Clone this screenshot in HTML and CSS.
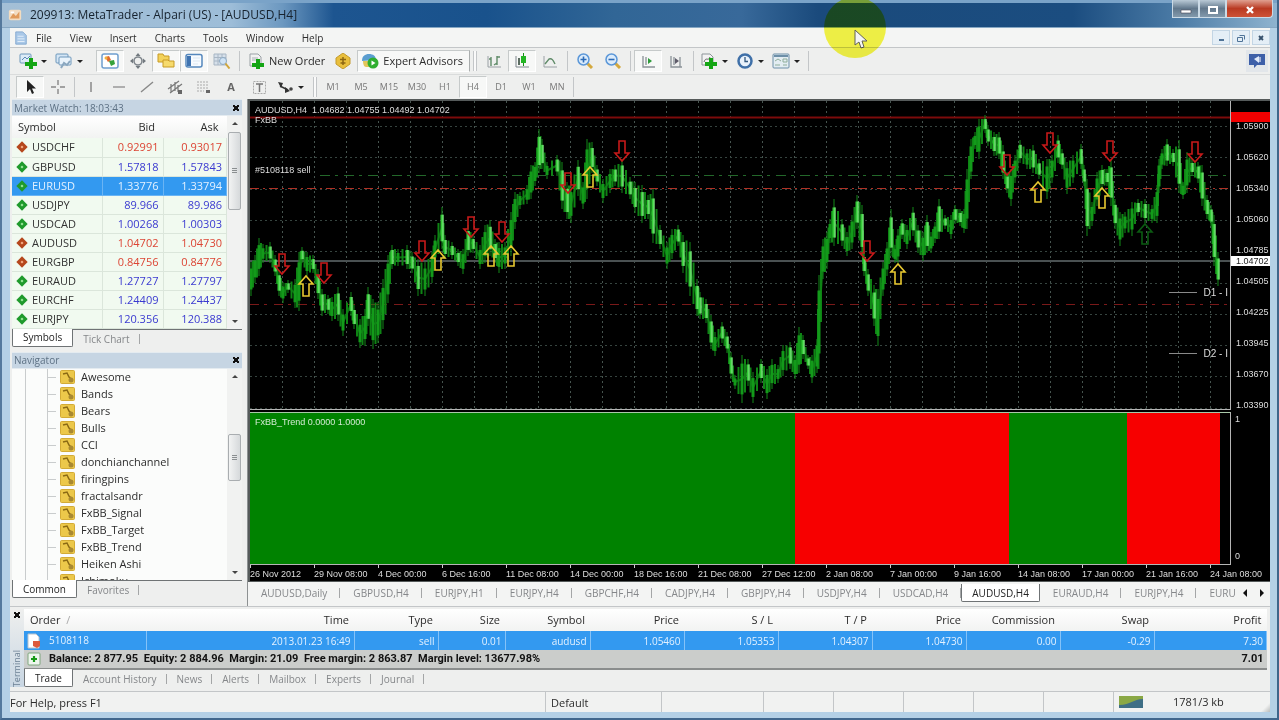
FILE: index.html
```html
<!DOCTYPE html>
<html lang="en">

<head>
  <meta charset="utf-8" />
  <meta name="viewport" content="width=device-width, initial-scale=1" />
  <title>209913: MetaTrader - Alpari (US) - [AUDUSD,H4]</title>
  <link rel="stylesheet" href="styles.css">
</head>

<body>
  <div class="window">
    <header class="titlebar">
      <svg class="app-icon" viewBox="0 0 16 16"><rect x="1" y="2" width="14" height="12" rx="2" fill="#f3dcc0" /><path d="M2 12l4-6 3 3 4-5v8z" fill="#e09a5a" /><path d="M3 4h4v2H3z" fill="#fff" /></svg>
      <h1>209913: MetaTrader - Alpari (US) - [AUDUSD,H4]</h1>
      <div class="caption-buttons">
        <button class="caption-btn" aria-label="Minimize"><svg viewBox="0 0 12 10"><path d="M1 5h10v3H1z" fill="#fff" stroke="#445" stroke-width=".6" /></svg></button>
        <button class="caption-btn" aria-label="Maximize"><svg viewBox="0 0 12 10"><path d="M2 2h8v6H2z" fill="none" stroke="#fff" stroke-width="2" /></svg></button>
        <button class="caption-btn close" aria-label="Close"><svg viewBox="0 0 12 10"><path d="M3 2l6 6M9 2L3 8" stroke="#fff" stroke-width="2.4" /></svg></button>
      </div>
    </header>

    <nav class="menubar">
      <svg class="doc-icon" viewBox="0 0 16 16"><path d="M2 1h8l4 4v10H2z" fill="#a9c8e8" stroke="#7fa6cf" /><path d="M4 6h7M4 9h8M4 12h8" stroke="#e8f2fb" /></svg>
      <a href="#">File</a>
      <a href="#">View</a>
      <a href="#">Insert</a>
      <a href="#">Charts</a>
      <a href="#">Tools</a>
      <a href="#">Window</a>
      <a href="#">Help</a>
      <div class="mdi-buttons">
        <button aria-label="Minimize chart"><svg viewBox="0 0 10 10"><path d="M3 7h5" stroke="#4f7397" stroke-width="2" /></svg></button>
        <button aria-label="Restore chart"><svg viewBox="0 0 10 10"><path d="M3.500 2.500h5v4M1.500 4.500h5v4h-5z" fill="none" stroke="#4f7397" /></svg></button>
        <button aria-label="Close chart"><svg viewBox="0 0 10 10"><path d="M3 3l4 4M7 3L3 7" stroke="#35506c" stroke-width="1.800" /></svg></button>
      </div>
    </nav>

    <div class="toolbar">
      <button class="tool drop" aria-label="New chart"><svg viewBox="0 0 18 16"><rect x="1" y="1" width="11" height="9" rx="1" fill="#dcebf7" stroke="#6d97bb" /><path d="M3 7l3-3 2 2 3-3" fill="none" stroke="#5b8cb6" /><path d="M10 5h4v4h4v4h-4v3h-4v-3H6V9h4z" fill="#14a514" /></svg></button>
      <button class="tool drop" aria-label="Profiles"><svg viewBox="0 0 18 16"><rect x="1" y="1" width="12" height="9" rx="1" fill="#d5e6f5" stroke="#6d97bb" /><rect x="4" y="4" width="12" height="8" rx="1" fill="#e9f3fb" stroke="#6d97bb" /><path d="M6 15l3-5 3 2 3-4" fill="none" stroke="#8aa7bf" stroke-width="2" /></svg></button>
      <span class="gap"></span>
      <button class="tool pressed" aria-label="Market Watch"><svg viewBox="0 0 18 16"><rect x="1" y="1" width="16" height="14" rx="2" fill="#fff" stroke="#6f9fcf" stroke-width="1.500" /><path d="M4 4l4-1 2 4-3 2z" fill="#e0692e" /><path d="M8 8l5-1 1 4-4 2z" fill="#35a23a" /><circle cx="5" cy="5" r="1.500" fill="#f0b33a" /></svg></button>
      <button class="tool" aria-label="Data Window"><svg viewBox="0 0 18 16"><circle cx="9" cy="8" r="4" fill="none" stroke="#7f868c" stroke-width="1.600" /><path d="M9 0l2.500 3h-5zM9 16l-2.500-3h5zM1 8l3-2.500v5zM17 8l-3-2.500v5z" fill="#72797f" /></svg></button>
      <button class="tool pressed" aria-label="Navigator"><svg viewBox="0 0 18 16"><path d="M1 1h5l1 2h5v6H1z" fill="#f3d25a" stroke="#c79a25" /><path d="M6 7h5l1 1h5v6H6z" fill="#f6da6c" stroke="#c79a25" /></svg></button>
      <button class="tool pressed" aria-label="Terminal"><svg viewBox="0 0 18 16"><rect x="1" y="1.500" width="16" height="12.500" rx="2" fill="#f7fbff" stroke="#5588bd" stroke-width="1.500" /><rect x="2" y="3" width="4" height="10" fill="#3f73b0" /><path d="M8 5h7M8 8h7M8 11h5" stroke="#dbe7f1" /></svg></button>
      <button class="tool" aria-label="Strategy Tester"><svg viewBox="0 0 18 16"><path d="M1 1h12v11H1z" fill="#d6e0ea" stroke="#a8b6c4" /><path d="M1 4.500h12M1 8h12M5 1v11M9 1v11" stroke="#a8b6c4" /><circle cx="10" cy="8" r="3.500" fill="#cfe3f5" stroke="#8da9c2" /><path d="M12.500 10.500l4 5" stroke="#d1a63a" stroke-width="2" /></svg></button>
      <span class="separator"></span>
      <button class="tool wide new-order"><svg viewBox="0 0 18 16"><path d="M3 1h8l3 3v9H3z" fill="#f2f2f2" stroke="#9aa0a5" /><path d="M5 5h6M5 7h5" stroke="#a9afb4" /><path d="M9 6h4v4h4v4h-4v2H9v-2H5v-4h4z" fill="#14a514" /></svg>New Order</button>
      <button class="tool" aria-label="MetaEditor"><svg viewBox="0 0 18 16"><path d="M9 0l7 5v6l-7 5-7-5V5z" fill="#e9bf3c" stroke="#c39a2c" /><path d="M9 4v8M6 6.500h6M6.500 10h5" stroke="#8d6712" stroke-width="1.500" /></svg></button>
      <button class="tool wide pressed experts"><svg viewBox="0 0 18 16"><path d="M1 8C1 3 4 1 8 1s7 2 7 6z" fill="#5b9ed0" /><path d="M2 8h9v6H5c-2 0-3-3-3-6z" fill="#e2c65a" /><circle cx="12" cy="10" r="5.500" fill="#2fae2f" /><path d="M10.500 7.500l4 2.500-4 2.500z" fill="#fff" /></svg>Expert Advisors</button>
      <span class="separator handle"></span>
      <button class="tool" aria-label="Bar chart"><svg viewBox="0 0 18 16"><path d="M3 3v11h13" fill="none" stroke="#9aa0a5" /><path d="M6 4v9M9 12l3-2M12 3v9M12 4h3M4 6h2" stroke="#5f8b68" stroke-width="1.400" /></svg></button>
      <button class="tool pressed" aria-label="Candlesticks"><svg viewBox="0 0 18 16"><path d="M3 3v11h13" fill="none" stroke="#7e868c" /><path d="M6 5v7" stroke="#5c6d62" stroke-width="2" /><path d="M10.500 0v13" stroke="#158f15" /><path d="M8 3h5v7H8z" fill="#23b523" /></svg></button>
      <button class="tool" aria-label="Line chart"><svg viewBox="0 0 18 16"><path d="M3 3v11h13" fill="none" stroke="#9aa0a5" /><path d="M4 11l4-5c3-1 4 1 6 5" fill="none" stroke="#5f8b68" stroke-width="1.400" /></svg></button>
      <span class="separator"></span>
      <button class="tool" aria-label="Zoom in"><svg viewBox="0 0 18 16"><path d="M11 10l5 5" stroke="#d4a93e" stroke-width="3" /><circle cx="7.500" cy="6.500" r="5.500" fill="#dcecfb" stroke="#5b97d8" stroke-width="1.500" /><path d="M4.500 6.500h6M7.500 3.500v6" stroke="#2c6cb8" stroke-width="1.600" /></svg></button>
      <button class="tool" aria-label="Zoom out"><svg viewBox="0 0 18 16"><path d="M11 10l5 5" stroke="#d4a93e" stroke-width="3" /><circle cx="7.500" cy="6.500" r="5.500" fill="#dcecfb" stroke="#5b97d8" stroke-width="1.500" /><path d="M4.500 6.500h6" stroke="#2c6cb8" stroke-width="1.600" /></svg></button>
      <span class="separator"></span>
      <button class="tool pressed" aria-label="Auto scroll"><svg viewBox="0 0 18 16"><path d="M4 3v11h12M7 4v8" fill="none" stroke="#8b9298" stroke-width="1.300" /><path d="M9 5l4 3-4 3z" fill="#2c9a38" /></svg></button>
      <button class="tool" aria-label="Chart shift"><svg viewBox="0 0 18 16"><path d="M4 3v11h11M7 4v8M13 4v10" fill="none" stroke="#8b9298" stroke-width="1.300" /><path d="M8 5l4 3-4 3z" fill="#5d5a68" /></svg></button>
      <span class="separator"></span>
      <button class="tool drop" aria-label="Indicators"><svg viewBox="0 0 18 16"><path d="M2 1h8l3 3v8H2z" fill="#f2f2f2" stroke="#8d9499" /><path d="M4 9c2-6 4 0 6-5" fill="none" stroke="#666" /><path d="M9 5h4v4h4v4h-4v3H9v-3H5V9h4z" fill="#14a514" /></svg></button>
      <button class="tool drop" aria-label="Periodicity"><svg viewBox="0 0 18 16"><circle cx="9" cy="8" r="6.500" fill="#e9f2fb" stroke="#3f70a8" stroke-width="2.500" /><path d="M9 4v4.500h3" fill="none" stroke="#33587f" stroke-width="1.300" /></svg></button>
      <button class="tool drop" aria-label="Templates"><svg viewBox="0 0 18 16"><rect x="1" y="1" width="16" height="14" rx="1" fill="#e3edf2" stroke="#6d8fa8" /><path d="M2 3h14" stroke="#6d8fa8" stroke-width="2" /><path d="M3 8l3-2 3 2M3 12h5M11 6h4v3h-4zM11 12h4" fill="none" stroke="#8fae9b" /></svg></button>
      <span class="separator"></span>
      <button class="tool chat" aria-label="Community chat"><svg viewBox="0 0 18 16"><path d="M1 1h16v11h-8l-3 3v-3H1z" fill="#3d5fa8" /><path d="M6 6l5-3v7z" fill="#dfe9fa" /><path d="M12 4v5" stroke="#fff" /></svg></button>
    </div>

    <div class="toolbar lines">
      <button class="tool pressed" aria-label="Cursor"><svg viewBox="0 0 18 16"><path d="M6 1v12l3-3 2 5 2-1-2-4.500h4z" fill="#222" /></svg></button>
      <button class="tool" aria-label="Crosshair"><svg viewBox="0 0 18 16"><path d="M9 1v5M9 10v5M2 8h5M11 8h5" stroke="#888" stroke-width="1.400" /></svg></button>
      <span class="separator"></span>
      <button class="tool" aria-label="Vertical line"><svg viewBox="0 0 18 16"><path d="M9 3v10" stroke="#888" stroke-width="1.500" /></svg></button>
      <button class="tool" aria-label="Horizontal line"><svg viewBox="0 0 18 16"><path d="M3 8h12" stroke="#999" stroke-width="1.500" /></svg></button>
      <button class="tool" aria-label="Trendline"><svg viewBox="0 0 18 16"><path d="M3 13L15 3" stroke="#888" stroke-width="1.400" /></svg></button>
      <button class="tool" aria-label="Equidistant channel"><svg viewBox="0 0 18 16"><path d="M2 10L13 2M4 14L16 5M5 5v8M9 3v9M12 6v7" stroke="#777" stroke-width="1.200" /><path d="M12 11h4v4h-4z" fill="#666" /></svg></button>
      <button class="tool" aria-label="Fibonacci retracement"><svg viewBox="0 0 18 16"><path d="M3 3h11M3 6h11M3 9h11M3 12h7" stroke="#aaa" stroke-dasharray="2 1" /><path d="M12 11h4v3h-4z" fill="#666" /></svg></button>
      <button class="tool letter">A</button>
      <button class="tool" aria-label="Text label"><svg viewBox="0 0 18 16"><rect x="3.500" y="2.500" width="12" height="12" fill="none" stroke="#aaa" stroke-dasharray="2 1" /><path d="M6 5h7M9.500 5v8" stroke="#777" stroke-width="1.500" /></svg></button>
      <button class="tool drop" aria-label="Arrows"><svg viewBox="0 0 18 16"><path d="M2 3l5 1-2 5zM9 8l5 4-5 2z" fill="#333" /><path d="M4 7l8 4" stroke="#333" stroke-width="1.500" /><circle cx="15" cy="10" r="1.800" fill="#444" /></svg></button>
      <span class="separator handle"></span>
      <button class="tool period">M1</button>
      <button class="tool period">M5</button>
      <button class="tool period">M15</button>
      <button class="tool period">M30</button>
      <button class="tool period">H1</button>
      <button class="tool period pressed">H4</button>
      <button class="tool period">D1</button>
      <button class="tool period">W1</button>
      <button class="tool period">MN</button>
      <span class="separator"></span>
    </div>

    <main class="workspace">
      <aside class="sidebar">
        <section class="panel">
          <h2 class="panel-title">Market Watch: 18:03:43<button class="panel-close" aria-label="Close Market Watch"></button></h2>
          <div class="panel-body">
            <table class="quotes">
              <thead>
                <tr><th>Symbol</th><th>Bid</th><th>Ask</th></tr>
              </thead>
              <tbody>
                <tr class="down"><td>USDCHF</td><td>0.92991</td><td>0.93017</td></tr>
                <tr><td>GBPUSD</td><td>1.57818</td><td>1.57843</td></tr>
                <tr class="selected"><td>EURUSD</td><td>1.33776</td><td>1.33794</td></tr>
                <tr><td>USDJPY</td><td>89.966</td><td>89.986</td></tr>
                <tr><td>USDCAD</td><td>1.00268</td><td>1.00303</td></tr>
                <tr class="down"><td>AUDUSD</td><td>1.04702</td><td>1.04730</td></tr>
                <tr class="down"><td>EURGBP</td><td>0.84756</td><td>0.84776</td></tr>
                <tr><td>EURAUD</td><td>1.27727</td><td>1.27797</td></tr>
                <tr><td>EURCHF</td><td>1.24409</td><td>1.24437</td></tr>
                <tr><td>EURJPY</td><td>120.356</td><td>120.388</td></tr>
              </tbody>
            </table>
            <div class="scrollbar"><span class="thumb tall"></span></div>
          </div>
          <div class="tabs">
            <button class="tab active">Symbols</button>
            <button class="tab">Tick Chart</button>
          </div>
        </section>

        <section class="panel navigator">
          <h2 class="panel-title">Navigator<button class="panel-close" aria-label="Close Navigator"></button></h2>
          <div class="panel-body">
            <ul class="tree">
              <li>Awesome</li>
              <li>Bands</li>
              <li>Bears</li>
              <li>Bulls</li>
              <li>CCI</li>
              <li>donchianchannel</li>
              <li>firingpins</li>
              <li>fractalsandr</li>
              <li>FxBB_Signal</li>
              <li>FxBB_Target</li>
              <li>FxBB_Trend</li>
              <li>Heiken Ashi</li>
              <li>Ichimoku</li>
            </ul>
            <div class="scrollbar"><span class="thumb middle"></span></div>
          </div>
          <div class="tabs">
            <button class="tab active">Common</button>
            <button class="tab">Favorites</button>
          </div>
        </section>
      </aside>

      <section class="charts">
        <div class="chart">
          <div class="plot">
            <svg id="price" viewBox="250 102 980 308" preserveAspectRatio="none"></svg>
            <p class="plot-title">AUDUSD,H4&nbsp; 1.04682 1.04755 1.04492 1.04702<br>FxBB</p>
            <p class="order-label">#5108118 sell</p>
            <p class="level d1">D1 - I</p>
            <p class="level d2">D2 - I</p>
          </div>
          <div class="price-axis">
            <span class="stop"></span>
            <span>1.05900</span>
            <span>1.05620</span>
            <span>1.05340</span>
            <span>1.05060</span>
            <span>1.04785</span>
            <span>1.04505</span>
            <span>1.04225</span>
            <span>1.03945</span>
            <span>1.03670</span>
            <span>1.03390</span>
            <span class="current">1.04702</span>
          </div>
          <div class="trend">
            <span class="up long"></span>
            <span class="dn wide"></span>
            <span class="up short"></span>
            <span class="dn last"></span>
            <p>FxBB_Trend 0.0000 1.0000</p>
          </div>
          <div class="trend-axis"><span>1</span><span>0</span></div>
          <div class="time-axis">
            <span>26 Nov 2012</span>
            <span>29 Nov 08:00</span>
            <span>4 Dec 00:00</span>
            <span>6 Dec 16:00</span>
            <span>11 Dec 08:00</span>
            <span>14 Dec 00:00</span>
            <span>18 Dec 16:00</span>
            <span>21 Dec 08:00</span>
            <span>27 Dec 12:00</span>
            <span>2 Jan 08:00</span>
            <span>7 Jan 00:00</span>
            <span>9 Jan 16:00</span>
            <span>14 Jan 08:00</span>
            <span>17 Jan 00:00</span>
            <span>21 Jan 16:00</span>
            <span>24 Jan 08:00</span>
          </div>
        </div>
        <div class="tabs chart-tabs">
          <div class="tab-strip">
            <button class="tab">AUDUSD,Daily</button>
            <button class="tab">GBPUSD,H4</button>
            <button class="tab">EURJPY,H1</button>
            <button class="tab">EURJPY,H4</button>
            <button class="tab">GBPCHF,H4</button>
            <button class="tab">CADJPY,H4</button>
            <button class="tab">GBPJPY,H4</button>
            <button class="tab">USDJPY,H4</button>
            <button class="tab">USDCAD,H4</button>
            <button class="tab active">AUDUSD,H4</button>
            <button class="tab">EURAUD,H4</button>
            <button class="tab">EURJPY,H4</button>
            <button class="tab">EURU</button>
          </div>
          <button class="tab-scroll left" aria-label="Scroll tabs left"></button>
          <button class="tab-scroll right" aria-label="Scroll tabs right"></button>
        </div>
      </section>
    </main>

    <section class="terminal">
      <div class="terminal-side">
        <button class="panel-close" aria-label="Close Terminal"></button>
        <h2>Terminal</h2>
      </div>
      <div class="terminal-main">
        <table class="orders">
          <colgroup>
            <col class="c-order"><col class="c-time"><col class="c-type"><col class="c-size"><col class="c-symbol">
            <col class="c-num"><col class="c-num"><col class="c-num"><col class="c-num"><col class="c-num"><col class="c-num">
            <col>
          </colgroup>
          <thead>
            <tr><th>Order <span class="sort">&nbsp;/</span></th><th>Time</th><th>Type</th><th>Size</th><th>Symbol</th><th>Price</th><th>S / L</th><th>T / P</th><th>Price</th><th>Commission</th><th>Swap</th><th>Profit</th></tr>
          </thead>
          <tbody>
            <tr class="selected">
              <td><svg class="row-icon" viewBox="0 0 14 16"><path d="M1 1h8l3 3v11H1z" fill="#fff" stroke="#b9c3cc" /><path d="M6 8h7v5l-3 2-4-2z" fill="#dd5a3c" /></svg>5108118</td>
              <td>2013.01.23 16:49</td><td>sell</td><td>0.01</td><td>audusd</td><td>1.05460</td><td>1.05353</td><td>1.04307</td><td>1.04730</td><td>0.00</td><td>-0.29</td><td>7.30</td>
            </tr>
            <tr class="balance">
              <td colspan="11"><svg class="row-icon" viewBox="0 0 14 16"><rect x="1" y="2" width="12" height="12" rx="1" fill="#eef6ee" stroke="#7ea67e" /><path d="M7 5v6M4 8h6" stroke="#199a19" stroke-width="2.200" /></svg>Balance: 2 877.95&nbsp; Equity: 2 884.96&nbsp; Margin: 21.09&nbsp; Free margin: 2 863.87&nbsp; Margin level: 13677.98%</td>
              <td>7.01</td>
            </tr>
          </tbody>
        </table>
        <div class="tabs">
          <button class="tab active">Trade</button>
          <button class="tab">Account History</button>
          <button class="tab">News</button>
          <button class="tab">Alerts</button>
          <button class="tab">Mailbox</button>
          <button class="tab">Experts</button>
          <button class="tab">Journal</button>
        </div>
      </div>
    </section>

    <footer class="statusbar">
      <span class="help">For Help, press F1</span>
      <span class="profile">Default</span>
      <span class="time"></span>
      <span></span>
      <span></span>
      <span></span>
      <span></span>
      <span></span>
      <span class="traffic"><svg viewBox="0 0 24 12"><path d="M0 0h24v12H0z" fill="#3f6f86" /><path d="M0 0h24v3C14 3 12 9 0 9z" fill="#8aa845" /></svg>1781/3 kb</span>
    </footer>
  </div>

  <div class="pointer">
    <svg viewBox="0 0 14 20"><path d="M1 1v15l4-3 2 6 3-1-2-6h5z" fill="#fff" stroke="#66665a" /></svg>
  </div>

  <script src="script.js"></script>
</body>

</html>
```
FILE: styles.css
```css
:root {
  --face: #eeefee;
  --line: #c3c6c8;
  --dark-line: #6f7375;
  --select: #3399f0;
  --blue: #3a3ad0;
  --red: #dc4534;
  --green: #008200;
}

* {
  box-sizing: border-box;
}

html,
body {
  height: 100%;
  margin: 0;
}

body {
  overflow: hidden;
  font-family: "Open Sans", "Noto Sans", sans-serif;
  font-size: 11px;
  line-height: 16px;
  color: #2c2c2c;
}

h1,
h2,
p,
ul {
  margin: 0;
  padding: 0;
  font-size: inherit;
  font-weight: normal;
}

button {
  padding: 0;
  border: 0;
  background: none;
  font: inherit;
  color: inherit;
}

table {
  border-collapse: collapse;
  table-layout: fixed;
  width: 100%;
}

td,
th {
  padding: 0;
  font-weight: normal;
  text-align: right;
  white-space: nowrap;
}

.window {
  display: flex;
  flex-direction: column;
  height: 100%;
  padding: 0 7px 6px 8px;
  border-left: 2px solid #54799d;
  border-right: 2px solid #3f658a;
  border-bottom: 2px solid #41678d;
  background: #b4d0e6;
}

/* title bar */

.titlebar {
  display: flex;
  align-items: center;
  height: 28px;
  flex: none;
  margin: 0 -7px 0 -8px;
  padding-left: 6px;
  border-top: 3px solid #7aa3c8;
  border-bottom: 1px solid #86a7c3;
  background: linear-gradient(90deg, #a3bfd6, #9dbdd8 18%, #6c98c0 22%, #1d5590 26%, #19528c 38%, #316696 48%, #38699a 58%, #1a4a7c 64%, #1b4d80 84%, #4a7aa5 92%, #8fb3cf);
}

.app-icon {
  width: 14px;
  height: 14px;
  margin-right: 8px;
}

.titlebar h1 {
  flex: 1;
  font-size: 12px;
  color: #16222e;
}

.caption-buttons {
  display: flex;
  align-self: flex-start;
  margin-top: -3px;
  margin-right: 4px;
}

.caption-btn {
  display: flex;
  align-items: center;
  justify-content: center;
  width: 27px;
  height: 18px;
  padding-top: 3px;
  border: 1px solid #cbdae6;
  border-top: 0;
  background: linear-gradient(#b9c9d6, #62788c 50%, #8299ac);
}

.caption-btn svg {
  width: 12px;
  height: 10px;
}

.caption-btn.close {
  width: 47px;
  border-radius: 0 0 4px 0;
  background: linear-gradient(#e0a090, #b93a22 50%, #cd5236);
}

/* menu */

.menubar {
  display: flex;
  align-items: center;
  height: 20px;
  flex: none;
  padding-left: 4px;
  border-bottom: 1px solid var(--line);
  background: #f4f5f4;
  font-size: 10px;
}

.doc-icon {
  width: 14px;
  height: 14px;
  margin-right: 8px;
}

.menubar a {
  margin-right: 18px;
  color: inherit;
  text-decoration: none;
}

.mdi-buttons {
  display: flex;
  gap: 2px;
  margin-left: auto;
}

.mdi-buttons button {
  width: 18px;
  height: 15px;
  border: 1px solid #c3d5e4;
  background: #e4eef6;
}

.mdi-buttons svg {
  display: block;
  width: 10px;
  height: 10px;
  margin: auto;
}

/* toolbars */

.toolbar {
  display: flex;
  align-items: center;
  height: 27px;
  flex: none;
  padding-left: 6px;
  border-bottom: 1px solid #dadcdc;
  background: var(--face);
}

.toolbar.lines {
  height: 24px;
  border-bottom: 0;
}

.tool {
  display: flex;
  align-items: center;
  justify-content: center;
  width: 28px;
  height: 22px;
  flex: none;
}

.tool svg {
  width: 18px;
  height: 16px;
  flex: none;
}

.tool.drop {
  justify-content: flex-start;
  width: 36px;
  padding-left: 3px;
}

.lines .tool.drop {
  width: 38px;
}

.tool.drop::after {
  content: "";
  margin-left: 4px;
  border: 3px solid transparent;
  border-top-color: #222;
  border-bottom: 0;
}

.tool.pressed {
  border: 1px solid #c6caca;
  border-right-color: #fff;
  border-bottom-color: #fff;
  background: #f7f8f7;
}

.tool.wide {
  width: auto;
  padding: 0 4px;
  gap: 4px;
}

.tool.experts {
  padding: 0 6px 0 3px;
  border-right: 1px solid #a9adad;
}

.tool.letter {
  font-weight: bold;
  color: #666;
}

.tool.period {
  font-size: 9px;
  color: #777;
}

.gap {
  width: 8px;
}

.separator {
  width: 1px;
  height: 20px;
  margin: 0 3px;
  background: var(--line);
}

.lines .separator {
  margin: 0 2px;
}

.separator.handle {
  width: 4px;
  border: 1px solid var(--line);
  border-width: 0 1px;
  background: #fafafa;
}

.tool.chat {
  width: 22px;
  margin-left: auto;
  margin-right: 2px;
  background: #e2e6ea;
}

/* workspace */

.workspace {
  display: flex;
  flex: 1;
  min-height: 0;
  border-bottom: 1px solid var(--line);
  background: var(--face);
}

.sidebar {
  display: flex;
  flex-direction: column;
  gap: 2px;
  width: 233px;
  flex: none;
  padding: 0 1px 5px 2px;
}

.panel {
  display: flex;
  flex-direction: column;
  min-height: 0;
}

.navigator {
  flex: 1;
}

.panel-title {
  display: flex;
  align-items: center;
  justify-content: space-between;
  height: 17px;
  padding: 0 3px 0 2px;
  border: 1px solid #e4ebf0;
  border-width: 1px 0;
  background: #c6d5e3;
  font-size: 10px;
  color: #5d7184;
}

.panel-close {
  width: 6px;
  height: 6px;
  background: linear-gradient(45deg, transparent 35%, #111 35% 65%, transparent 65%), linear-gradient(-45deg, transparent 35%, #111 35% 65%, transparent 65%);
}

.panel-body {
  display: flex;
  flex: 1;
  min-height: 0;
  background: #fbfcfb;
  border-bottom: 1px solid var(--dark-line);
}

.quotes {
  width: auto;
  flex: 1;
}

.quotes th {
  height: 22px;
  background: linear-gradient(#fff, #f2f3f2);
}

.quotes th:first-child {
  width: 90px;
  padding-left: 6px;
  text-align: left;
}

.quotes th:nth-child(2) {
  width: 61px;
}

.quotes th {
  padding-right: 8px;
}

.quotes td {
  height: 19px;
  padding-right: 4px;
  line-height: 18px;
  border: 1px solid #dbe6db;
  border-width: 0 1px 1px 0;
  background: #f1faf0;
  color: var(--blue);
}

.quotes td:first-child {
  text-align: left;
  color: #333;
}

.quotes td:first-child::before {
  content: "";
  display: inline-block;
  width: 8px;
  height: 8px;
  margin: 0 6px;
  background: radial-gradient(#8fe08f 15%, #1f9a2c 30%);
  transform: rotate(45deg);
}

.quotes .down td {
  color: var(--red);
}

.quotes .down td:first-child {
  color: #333;
}

.quotes .down td:first-child::before {
  background: radial-gradient(#f0a37a 15%, #b5471c 30%);
}

.quotes .selected td,
.quotes .selected td:first-child {
  border-color: #6ab4f4;
  background: var(--select);
  color: #e3f1ff;
}

.scrollbar {
  position: relative;
  width: 15px;
  flex: none;
  background: #f1f2f1;
}

.scrollbar::before,
.scrollbar::after {
  content: "";
  position: absolute;
  left: 5px;
  border: 3px solid transparent;
}

.scrollbar::before {
  top: 6px;
  border-top: 0;
  border-bottom-color: #444;
}

.scrollbar::after {
  bottom: 6px;
  border-bottom: 0;
  border-top-color: #444;
}

.thumb {
  position: absolute;
  left: 1px;
  right: 1px;
  border: 1px solid #a9adb0;
  border-radius: 2px;
  background: linear-gradient(90deg, #f2f3f3, #d6d9db);
}

.thumb::after {
  content: "";
  position: absolute;
  top: 50%;
  left: 3px;
  width: 5px;
  height: 5px;
  margin-top: -3px;
  background: repeating-linear-gradient(#8a8e90 0 1px, transparent 1px 2px);
}

.thumb.tall {
  top: 16px;
  height: 78px;
}

.thumb.middle {
  top: 31%;
  height: 47px;
}

.tree {
  flex: 1;
  overflow: hidden;
  margin-left: 13px;
  border-left: 1px solid #c9cccd;
  list-style: none;
}

.tree li {
  display: flex;
  align-items: center;
  height: 17px;
  margin-left: 21px;
  border-left: 1px solid #c9cccd;
}

.tree li::before {
  content: "";
  width: 8px;
  height: 1px;
  margin-right: 4px;
  background: #c9cccd;
}

.tree svg {
  width: 15px;
  height: 14px;
  margin-right: 6px;
}

/* tabs shared by every panel */

.tabs {
  display: flex;
  height: 20px;
  flex: none;
  background: var(--face);
  font-size: 10px;
  color: #85878a;
}

.tab {
  position: relative;
  height: 18px;
  padding: 0 10px;
  white-space: nowrap;
  flex: none;
}

.tab::after {
  content: "";
  position: absolute;
  top: 4px;
  right: 0;
  width: 1px;
  height: 10px;
  background: #a4a6a7;
}

.tab.active {
  margin-top: -1px;
  border: 1px solid var(--dark-line);
  border-top: 0;
  border-radius: 0 0 2px 2px;
  background: #fff;
  color: #222;
}

.tab.active::after {
  display: none;
}

/* chart window */

.charts {
  display: flex;
  flex-direction: column;
  flex: 1;
  min-width: 0;
  margin-left: 4px;
  border-left: 1px solid #8d9192;
}

.chart {
  display: grid;
  grid-template: 1fr 155px 16px / 1fr 39px;
  flex: 1;
  min-height: 0;
  border: 2px solid #555a5a;
  border-width: 2px 0 1px 2px;
  background: #000;
  color: #ddd;
  font-family: "Liberation Sans", Arial, sans-serif;
  font-size: 9px;
  line-height: 10px;
  white-space: nowrap;
}

.plot,
.trend {
  position: relative;
  min-height: 0;
  border-right: 1px solid #b5b5b5;
  border-bottom: 1px solid #b5b5b5;
}

.plot svg {
  display: block;
  width: 100%;
  height: 100%;
}

.plot p,
.trend p {
  position: absolute;
}

.plot-title {
  top: 4px;
  left: 5px;
}

.order-label {
  top: 64px;
  left: 5px;
}

.level {
  right: 2px;
  font-size: 10px;
}

.level.d1 {
  top: 187px;
}

.level.d2 {
  top: 248px;
}

.price-axis {
  position: relative;
  display: flex;
  flex-direction: column;
  justify-content: space-between;
  padding: 20px 0 0 5px;
  overflow: hidden;
}

.price-axis .stop,
.price-axis .current {
  position: absolute;
  left: 0;
  right: 0;
  height: 10px;
  padding-left: 5px;
}

.price-axis .stop {
  top: 11px;
  background: #f20000;
}

.price-axis .current {
  top: 155px;
  background: #fff;
  color: #222;
}

.trend {
  display: flex;
  margin-top: 2px;
  border-top: 1px solid #a8c8a8;
}

.trend .up {
  background: var(--green);
}

.trend .dn {
  background: #f70000;
}

.trend .long {
  flex: 0 0 55.6%;
}

.trend .wide {
  flex: 0 0 21.8%;
}

.trend .short {
  flex: 0 0 12.1%;
}

.trend .last {
  flex: 0 0 9.5%;
}

.trend p {
  top: 4px;
  left: 5px;
  color: #d4ecd4;
}

.trend-axis {
  display: flex;
  flex-direction: column;
  justify-content: space-between;
  padding: 4px;
}

.time-axis {
  grid-column: 1 / 3;
  display: grid;
  grid-template-columns: repeat(16, minmax(0, 64fr)) 0;
  margin-right: -4px;
  overflow: hidden;
}

.time-axis span {
  padding-top: 4px;
  background: linear-gradient(#ccc, #ccc) 0 0 / 1px 3px no-repeat;
}

.chart-tabs {
  height: 24px;
  padding-top: 2px;
  align-items: flex-start;
  background: #f3f4f3;
}

.tab-strip {
  display: flex;
  flex: 1;
  overflow: hidden;
}

.chart-tabs .tab {
  padding: 0 13px;
}

.chart-tabs .tab.active {
  margin-top: 0;
  padding: 0 10px;
}

.tab-scroll {
  width: 17px;
  height: 18px;
}

.tab-scroll::before {
  content: "";
  display: inline-block;
  border: 4px solid transparent;
}

.tab-scroll.left::before {
  border-left: 0;
  border-right-color: #111;
}

.tab-scroll.right::before {
  border-right: 0;
  border-left-color: #111;
}

/* terminal */

.terminal {
  display: flex;
  flex: none;
  padding: 2px 3px 4px 0;
  border-bottom: 1px solid var(--line);
  background: var(--face);
}

.terminal-side {
  display: flex;
  flex-direction: column;
  align-items: center;
  justify-content: space-between;
  width: 14px;
  padding-top: 3px;
  background: linear-gradient(var(--face), #c8d6e3);
}

.terminal-side h2 {
  writing-mode: vertical-rl;
  transform: rotate(180deg);
  font-size: 9px;
  line-height: 12px;
  color: #6d8194;
}

.terminal-main {
  flex: 1;
  min-width: 0;
}

.c-order {
  width: 122px;
}

.c-time {
  width: 208px;
}

.c-type {
  width: 84px;
}

.c-size {
  width: 67px;
}

.c-symbol {
  width: 85px;
}

.c-num {
  width: 94px;
}

.orders {
  border-bottom: 2px solid #8a8d8d;
}

.orders th {
  height: 22px;
  padding-right: 5px;
  background: linear-gradient(#fff, #f2f3f2);
}

.orders th:first-child,
.orders td:first-child {
  text-align: left;
}

.orders th:first-child {
  padding-left: 6px;
}

.orders td {
  height: 19px;
  padding-right: 3px;
}

.orders .selected td {
  border-right: 1px solid #85c2f8;
  background: var(--select);
  color: #e3f1ff;
  font-size: 10px;
}

.orders .balance td {
  background: #cbcdcb;
  font-family: Roboto, "Open Sans", sans-serif;
  font-weight: bold;
  color: #111;
}

.sort {
  color: #aaa;
}

.row-icon {
  width: 14px;
  height: 16px;
  margin: 0 8px 0 3px;
  vertical-align: middle;
}

.terminal .tabs {
  height: 17px;
}

/* status bar */

.statusbar {
  display: flex;
  align-items: stretch;
  height: 20px;
  flex: none;
  line-height: 22px;
  background: linear-gradient(135deg, transparent 60%, #b9bcbc) right bottom / 12px 12px no-repeat, #f1f2f1;
}

.statusbar span {
  width: 70px;
  padding-left: 5px;
  border-left: 1px solid var(--line);
}

.statusbar .help {
  flex: 1;
  padding-left: 0;
  border-left: 0;
}

.statusbar .profile {
  width: 116px;
}

.statusbar .time {
  width: 102px;
}

.statusbar .traffic {
  display: flex;
  align-items: center;
  width: 157px;
}

.traffic svg {
  width: 24px;
  height: 12px;
  margin-right: 30px;
}

/* highlighted mouse pointer */

.pointer {
  position: absolute;
  top: -3px;
  left: 824px;
  width: 62px;
  height: 61px;
  mix-blend-mode: multiply;
  border-radius: 50%;
  background: #f8f848;
}

.pointer svg {
  position: absolute;
  top: 32px;
  left: 30px;
  width: 14px;
  height: 20px;
}
```
FILE: script.js
```js
// [x, high, low] for every bar
const bars = [
  [251, 265, 295], [255, 258, 282], [259, 241, 275], [263, 247, 262], [270, 245, 262], [275, 258, 275], [279, 273, 295],
  [283, 285, 302], [288, 283, 292], [295, 282, 307], [299, 255, 310], [302, 250, 262], [307, 255, 275], [313, 258, 272],
  [318, 272, 298], [322, 292, 315], [328, 298, 313], [332, 300, 320], [338, 290, 320], [343, 312, 335], [351, 295, 315],
  [354, 308, 328], [360, 322, 347], [365, 312, 345], [368, 290, 325], [373, 302, 348], [378, 305, 342], [383, 282, 328],
  [388, 258, 302], [392, 248, 268], [398, 252, 265], [407, 248, 268], [412, 255, 272], [418, 262, 295], [425, 265, 295],
  [432, 255, 282], [435, 238, 262], [442, 210, 248], [445, 238, 258], [452, 245, 258], [458, 252, 265], [463, 252, 273],
  [468, 228, 255], [473, 238, 252], [480, 248, 268], [485, 228, 262], [490, 223, 255], [495, 242, 262], [499, 245, 272],
  [505, 245, 268], [511, 215, 255], [515, 195, 228], [520, 195, 208], [527, 188, 203], [531, 168, 198], [535, 165, 185],
  [539, 132, 172], [542, 142, 168], [547, 165, 178], [557, 158, 175], [562, 165, 208], [567, 185, 218], [571, 188, 222],
  [578, 163, 195], [583, 185, 208], [587, 142, 198], [592, 145, 172], [597, 168, 185], [603, 182, 202], [610, 172, 192],
  [615, 168, 185], [622, 162, 192], [630, 180, 198], [635, 185, 212], [642, 188, 222], [648, 198, 218], [653, 192, 242],
  [660, 228, 248], [667, 245, 268], [672, 232, 258], [678, 228, 245], [683, 238, 272], [690, 245, 295], [697, 282, 315],
  [700, 295, 318], [706, 302, 322], [711, 318, 348], [715, 335, 355], [722, 325, 342], [727, 335, 352], [731, 355, 378],
  [735, 378, 388], [742, 358, 402], [748, 362, 385], [753, 375, 402], [761, 362, 382], [767, 372, 398], [772, 362, 388],
  [778, 368, 382], [783, 348, 375], [790, 345, 368], [795, 358, 378], [799, 330, 372], [803, 338, 358], [808, 358, 368],
  [812, 358, 382], [817, 342, 372], [819, 278, 368], [823, 242, 278], [827, 235, 268], [830, 222, 242], [834, 202, 245],
  [842, 222, 245], [847, 235, 255], [852, 218, 248], [857, 198, 228], [862, 208, 255], [864, 255, 275], [868, 272, 295],
  [874, 288, 325], [878, 292, 345], [883, 265, 295], [887, 245, 275], [891, 212, 255], [895, 248, 262], [898, 232, 262],
  [902, 222, 238], [907, 228, 248], [913, 210, 235], [918, 228, 252], [923, 235, 260], [927, 218, 252], [931, 235, 252],
  [935, 225, 242], [939, 202, 238], [945, 218, 228], [951, 218, 238], [955, 208, 223], [960, 212, 225], [964, 212, 232],
  [967, 172, 228], [971, 142, 178], [975, 135, 148], [979, 122, 158], [985, 118, 132], [988, 128, 145], [994, 135, 155],
  [999, 135, 158], [1003, 148, 178], [1007, 175, 192], [1011, 172, 205], [1015, 158, 182], [1020, 143, 162], [1027, 152, 168],
  [1033, 148, 172], [1039, 162, 178], [1047, 162, 198], [1052, 158, 182], [1058, 138, 162], [1062, 152, 168], [1067, 165, 193],
  [1073, 158, 182], [1081, 147, 168], [1084, 168, 185], [1087, 182, 235], [1092, 205, 225], [1097, 175, 205], [1102, 168, 188],
  [1107, 172, 185], [1111, 162, 205], [1115, 202, 228], [1120, 215, 245], [1125, 215, 232], [1132, 205, 235], [1138, 202, 215],
  [1145, 202, 222], [1152, 208, 222], [1157, 188, 222], [1159, 162, 192], [1162, 152, 168], [1167, 142, 165], [1173, 152, 165],
  [1179, 143, 192], [1183, 185, 198], [1187, 155, 192], [1192, 162, 175], [1198, 165, 182], [1202, 168, 205], [1207, 198, 218],
  [1211, 208, 225], [1214, 218, 265], [1218, 255, 285]
];

const sells = [[282, 265], [324, 274], [422, 252], [471, 228], [502, 233], [568, 184], [622, 152], [867, 252], [1007, 166], [1050, 144], [1110, 152], [1195, 153]];
const buys = [[306, 287], [438, 261], [491, 257], [511, 257], [590, 178], [898, 275], [1038, 193], [1102, 199]];

const svg = document.getElementById('price');

function add(d, stroke, width, extra) {
  const path = document.createElementNS('http://www.w3.org/2000/svg', 'path');
  path.setAttribute('d', d);
  path.setAttribute('stroke', stroke);
  path.setAttribute('stroke-width', width);
  path.setAttribute('fill', 'none');
  for (const name in extra) path.setAttribute(name, extra[name]);
  svg.appendChild(path);
}

// grid
for (let x = 282; x < 1230; x += 32) add(`M${x}.5 102V410`, '#46544f', 1, { 'stroke-dasharray': '2 3' });
for (let i = 0; i < 10; i++) add(`M250 ${Math.round(127 + i * 31.3)}.5H1230`, '#36443f', 1, { 'stroke-dasharray': '2 3' });

// levels
add('M250 118.500H1230', '#7d0b0b', 2);
add('M320 176.500H1230', '#23682a', 1, { 'stroke-dasharray': '10 5 3 6' });
add('M250 189.500H1230', '#b03024', 1, { 'stroke-dasharray': '9 4 2 4' });
add('M250 262H1230', '#4a5152', 2);
add('M250 305.500H1230', '#7a1919', 1, { 'stroke-dasharray': '9 5 3 7' });
add('M1169 293.500H1197M1169 354.500H1197', '#8a8a8a', 1);

// candles, with a smaller rising one filling each interval
bars.forEach(([x, high, low], i) => {
  const mid = (high + low) / 2;
  const next = bars[i + 1] || [x, high, low + 20];
  const nextMid = (next[1] + next[2]) / 2;
  const pad = (low - high) * 0.15;
  const falling = nextMid > mid;
  if (bars[i + 1]) {
    const between = (x + next[0]) / 2;
    add(`M${x} ${mid}L${next[0]} ${nextMid}`, '#0b6b10', 2);
    add(`M${between} ${(high + next[1]) / 2}V${(low + next[2]) / 2}`, '#0e8414', 2);
  }
  add(`M${x} ${high - 2}V${low + 2}`, '#128a18', 1);
  add(`M${x} ${high + pad}V${low - pad}`, falling ? '#35cc38' : '#139a1a', 3);
  if (falling) add(`M${x + 1} ${high + pad}V${low - pad}`, '#8fe890', 1);
});

// signals
sells.forEach(([x, y]) => add(`M${x - 3} ${y - 10}h6v12h4l-7 8l-7 -8h4z`, '#c81a1a', 1.6));
buys.forEach(([x, y]) => add(`M${x - 3} ${y + 10}h6v-12h4l-7 -8l-7 8h4z`, '#e8c830', 1.6));
add('M1142 245h6v-12h4l-7 -8l-7 8h4z', '#0b5c12', 1.6);

// indicator icons in the navigator tree
document.querySelectorAll('.tree li').forEach(li => {
  li.insertAdjacentHTML('afterbegin', '<svg viewBox="0 0 15 14"><rect x=".5" y=".5" width="14" height="13" rx="1" fill="#ecc84a" stroke="#d3ab35"/><path d="M3 4l4-1 2 4 3 3" fill="none" stroke="#8b6a14" stroke-width="1.500"/><circle cx="11" cy="10" r="2.500" fill="#a98931"/></svg>');
});
```
